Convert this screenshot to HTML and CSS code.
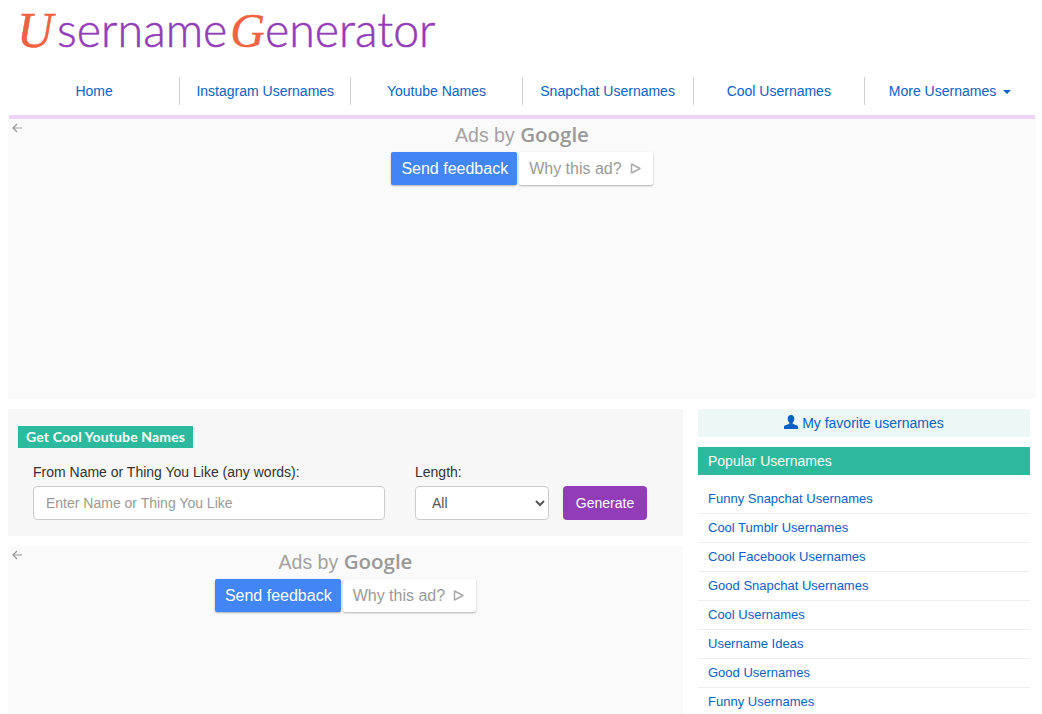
FILE: index.html
```html
<!DOCTYPE html>
<html lang="en">
<head>
  <meta charset="UTF-8">
  <title>Username Generator</title>
  <meta name="viewport" content="width=device-width, initial-scale=1.0">
  <link rel="stylesheet" href="styles.css">
</head>
<body>
  <div class="logo"><span class="cap cap-u">U</span>sername<span class="cap cap-g">G</span>enerator</div>

  <nav class="menu">
    <a href="#">Home</a>
    <a href="#">Instagram Usernames</a>
    <a href="#">Youtube Names</a>
    <a href="#">Snapchat Usernames</a>
    <a href="#">Cool Usernames</a>
    <a href="#">More Usernames <i class="caret"></i></a>
  </nav>

  <div class="ad ad-top">
    <svg class="back" width="12" height="12" viewBox="0 0 12 12"><path d="M11 6H2M6 2L2 6l4 4" fill="none" stroke="#999" stroke-width="1.2"/></svg>
    <div class="ads-by">Ads by <b>Google</b></div>
    <div class="ad-btns">
      <span class="feedback">Send feedback</span>
      <span class="why">Why this ad?
        <svg width="12" height="13" viewBox="0 0 12 13"><path d="M1.500 1.500v10M1.500 2l8.500 4.500-8.500 4.500" fill="none" stroke="#aaa" stroke-width="1.500" stroke-linejoin="round"/></svg>
      </span>
    </div>
  </div>

  <div class="columns">
    <div class="main">
      <form class="panel">
        <h2>Get Cool Youtube Names</h2>
        <div class="fields">
          <div class="field field-name">
            <label for="name">From Name or Thing You Like (any words):</label>
            <input type="text" id="name" placeholder="Enter Name or Thing You Like">
          </div>
          <div class="field field-length">
            <label for="length">Length:</label>
            <select id="length"><option>All</option></select>
          </div>
          <button type="button" class="generate">Generate</button>
        </div>
      </form>

      <div class="ad ad-bottom">
        <svg class="back" width="12" height="12" viewBox="0 0 12 12"><path d="M11 6H2M6 2L2 6l4 4" fill="none" stroke="#999" stroke-width="1.2"/></svg>
        <div class="ads-by">Ads by <b>Google</b></div>
        <div class="ad-btns">
          <span class="feedback">Send feedback</span>
          <span class="why">Why this ad?
            <svg width="12" height="13" viewBox="0 0 12 13"><path d="M1.500 1.500v10M1.500 2l8.500 4.500-8.500 4.500" fill="none" stroke="#aaa" stroke-width="1.500" stroke-linejoin="round"/></svg>
          </span>
        </div>
      </div>
    </div>

    <aside class="side">
      <a class="favorites" href="#">
        <svg width="14" height="14" viewBox="0 0 14 14"><path d="M7 0C4.900 0 3.700 1.600 3.700 3.700c0 1.500.6 3 1.600 3.800v1.200L.4 10.800C0 11 0 11.400 0 12v2h14v-2c0-.6 0-1-.4-1.200L8.700 8.700V7.500c1-.8 1.600-2.300 1.600-3.800C10.300 1.600 9.100 0 7 0z" fill="#0b62c4"/></svg>
        My favorite usernames
      </a>
      <h3>Popular Usernames</h3>
      <ul class="links">
        <li><a href="#">Funny Snapchat Usernames</a></li>
        <li><a href="#">Cool Tumblr Usernames</a></li>
        <li><a href="#">Cool Facebook Usernames</a></li>
        <li><a href="#">Good Snapchat Usernames</a></li>
        <li><a href="#">Cool Usernames</a></li>
        <li><a href="#">Username Ideas</a></li>
        <li><a href="#">Good Usernames</a></li>
        <li><a href="#">Funny Usernames</a></li>
      </ul>
    </aside>
  </div>
</body>
</html>
```

FILE: styles.css
```css
* {
  box-sizing: border-box;
}

body {
  margin: 0;
  height: 100vh;
  overflow: hidden;
  padding: 0 8px;
  font-family: "Liberation Sans", Arial, sans-serif;
  font-size: 14px;
  color: #333;
  background: #fff;
}

a {
  color: #0b62c4;
  text-decoration: none;
}

.logo {
  height: 65px;
  padding: 4px 0 0 9px;
  font-family: Lato, sans-serif;
  font-size: 46.500px;
  font-weight: 300;
  line-height: 50px;
  color: #933cb8;
  white-space: nowrap;
  -webkit-text-stroke: 0.5px #933cb8;
}

.cap {
  font-family: "Liberation Serif", serif;
  font-style: italic;
  color: #f26241;
  -webkit-text-stroke: 0.4px #f26241;
}

.cap-u {
  margin-right: 4px;
  font-size: 50px;
}

.cap-g {
  margin-left: 3px;
  font-size: 48px;
}

.menu {
  display: flex;
  height: 54px;
  width: 1026px;
  margin-left: 1px;
  padding: 12px 0 10px;
  border-bottom: 4px solid #ecd5f6;
}

.menu a {
  flex: 1;
  height: 28px;
  line-height: 28px;
  text-align: center;
  border-left: 1px solid #d0d0d0;
}

.menu a:first-child {
  border-left: none;
}

.caret {
  display: inline-block;
  margin-left: 3px;
  vertical-align: middle;
  border-top: 4px solid #0b62c4;
  border-left: 4px solid transparent;
  border-right: 4px solid transparent;
}

.ad {
  position: relative;
  text-align: center;
  background: #fafafa;
}

.ad-top {
  width: 1028px;
  height: 280px;
  margin-bottom: 10px;
}

.ad-bottom {
  height: 168px;
  margin-top: 10px;
}

.back {
  position: absolute;
  top: 3px;
  left: 3px;
}

.ads-by {
  padding-top: 2px;
  font-size: 19.500px;
  line-height: 26px;
  color: #a3a3a3;
}

.ads-by b {
  font-family: "Open Sans", sans-serif;
  font-size: 20.500px;
  font-weight: 600;
  color: #999;
}

.ad-btns {
  display: flex;
  justify-content: center;
  gap: 2px;
  margin-top: 4px;
}

.feedback,
.why {
  display: flex;
  align-items: center;
  height: 33px;
  font-size: 16px;
  border-radius: 2px;
  box-shadow: 0 1px 2px rgba(0, 0, 0, 0.3);
}

.feedback {
  padding: 0 9px 0 10px;
  color: #fff;
  background: #4285f4;
}

.why {
  gap: 8px;
  padding: 0 11px 0 10px;
  color: #9a9a9a;
  background: #fff;
}

.columns {
  display: flex;
  gap: 15px;
}

.main {
  width: 675px;
}

.panel {
  height: 127px;
  padding: 17px 10px 0;
  background: #f7f7f7;
}

.panel h2 {
  display: inline-block;
  height: 22px;
  margin: 0;
  padding: 0 8px;
  line-height: 22px;
  font-family: Lato, sans-serif;
  font-size: 14px;
  font-weight: 700;
  letter-spacing: 0.14px;
  color: #fff;
  background: #2db99d;
}

.fields {
  display: flex;
  align-items: flex-end;
  margin: 14px 0 0 15px;
}

.field label {
  display: block;
  margin-bottom: 4px;
  line-height: 20px;
}

.field input,
.field select {
  display: block;
  height: 34px;
  font-family: inherit;
  font-size: 14px;
  background: #fff;
  border: 1px solid #ccc;
  border-radius: 4px;
}

.field input {
  width: 352px;
  padding: 0 12px;
}

.field input::placeholder {
  color: #999;
  opacity: 1;
}

.field-length {
  margin-left: 30px;
}

.field select {
  width: 134px;
  padding: 0 12px;
  color: #555;
}

.generate {
  width: 84px;
  height: 34px;
  margin-left: 14px;
  font-family: inherit;
  font-size: 14px;
  color: #fff;
  background: #933cb8;
  border: none;
  border-radius: 4px;
}

.side {
  width: 332px;
}

.favorites {
  display: block;
  height: 28px;
  line-height: 28px;
  text-align: center;
  background: #edf7f5;
}

.favorites svg {
  vertical-align: -1px;
}

.side h3 {
  height: 28px;
  margin: 10px 0 0;
  padding-left: 10px;
  line-height: 28px;
  font-size: 14px;
  font-weight: 400;
  color: #fff;
  background: #2db99d;
}

.links {
  margin: 10px 0 0;
  padding: 0;
  list-style: none;
}

.links li {
  height: 29px;
  padding-left: 10px;
  font-size: 13px;
  line-height: 28px;
  border-bottom: 1px solid #eee;
}
```
